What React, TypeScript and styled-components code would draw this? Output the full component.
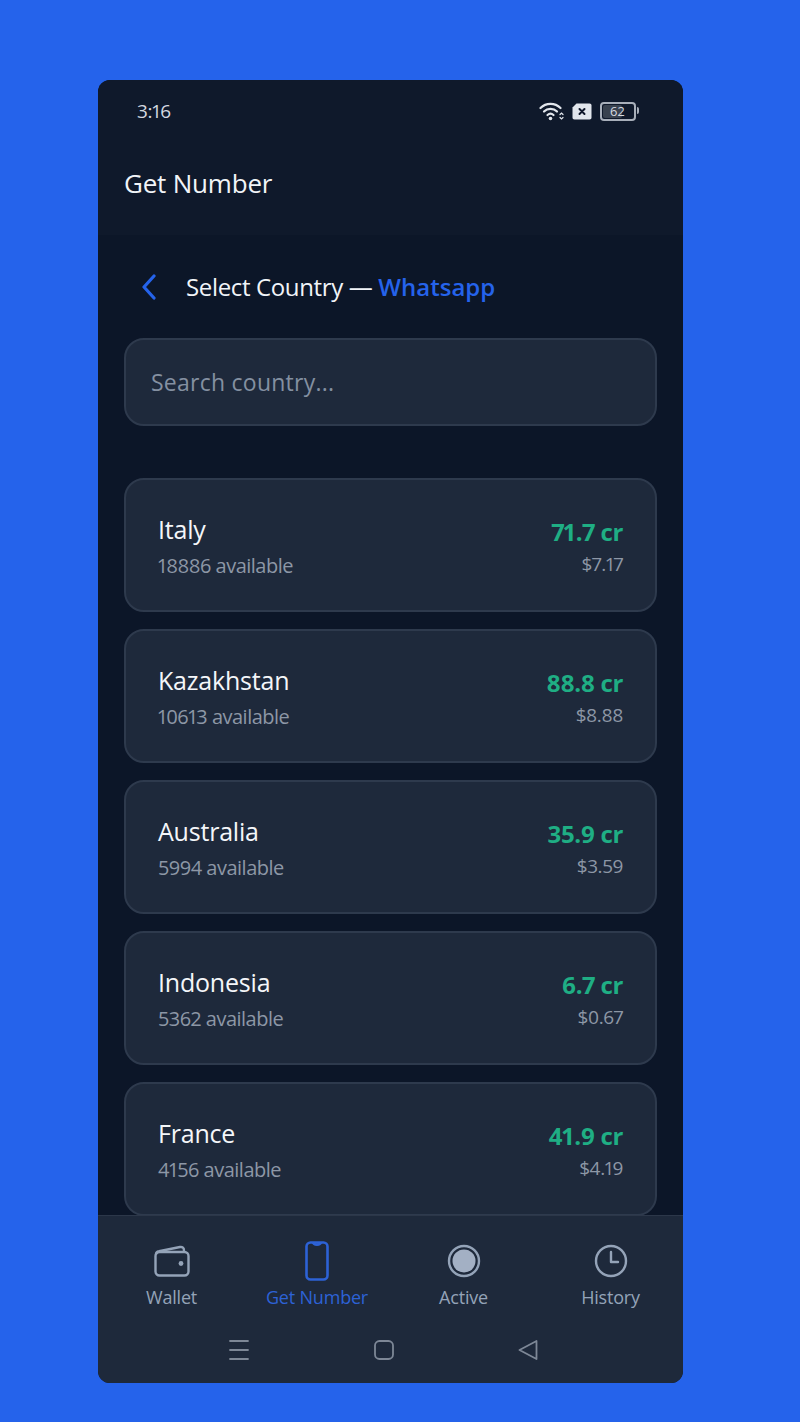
import React from "react";
import styled, { createGlobalStyle } from "styled-components";

const countries = [
  { name: "Italy", available: 18886, credits: "71.7 cr", price: "$7.17" },
  { name: "Kazakhstan", available: 10613, credits: "88.8 cr", price: "$8.88" },
  { name: "Australia", available: 5994, credits: "35.9 cr", price: "$3.59" },
  { name: "Indonesia", available: 5362, credits: "6.7 cr", price: "$0.67" },
  { name: "France", available: 4156, credits: "41.9 cr", price: "$4.19" },
];

const WalletIcon = () => (
  <svg width="36" height="34" viewBox="0 0 36 34" fill="none" stroke="currentColor" strokeWidth="2.4" strokeLinejoin="round">
    <path d="M2 10.5 C2 8.5 3 7.5 5 7.2 L26 3 C28.5 2.6 30 4 30 6.5 V8" />
    <rect x="1.5" y="8" width="33" height="23.5" rx="4" />
    <circle cx="27" cy="19.5" r="2.4" fill="currentColor" stroke="none" />
  </svg>
);

const PhoneIcon = () => (
  <svg width="24" height="40" viewBox="0 0 24 40" fill="none" stroke="currentColor" strokeWidth="2.6" strokeLinejoin="round">
    <rect x="1.5" y="1.5" width="21" height="37" rx="4" />
    <path d="M8 1.5 C8.5 3.4 9.5 3.6 12 3.6 C14.5 3.6 15.5 3.4 16 1.5" />
  </svg>
);

const ActiveIcon = () => (
  <svg width="34" height="34" viewBox="0 0 34 34" fill="none">
    <circle cx="17" cy="17" r="15" stroke="currentColor" strokeWidth="2.4" />
    <circle cx="17" cy="17" r="11.5" fill="#a3b0c4" />
  </svg>
);

const ClockIcon = () => (
  <svg width="34" height="34" viewBox="0 0 34 34" fill="none" stroke="currentColor" strokeWidth="2.4" strokeLinecap="round" strokeLinejoin="round">
    <circle cx="17" cy="17" r="15" />
    <path d="M17 8 V18 H24" />
  </svg>
);

const App = () => {
  return (
    <>
      <GlobalStyle />
      <Phone>
        <StatusBar>
          <Time>3:16</Time>
          <StatusIcons>
            <svg width="25" height="20" viewBox="0 0 25 20" fill="none" stroke="#e2e6ec" strokeWidth="2.2" strokeLinecap="round">
              <path d="M1.5 7 C7 1.5 16 1.5 21.5 7" />
              <path d="M5 10.5 C8.5 7 14.5 7 18 10.5" />
              <path d="M8.5 14 C10.5 12.3 12.5 12.3 14.5 14" />
              <circle cx="11.5" cy="17.5" r="1.8" fill="#e2e6ec" stroke="none" />
              <path d="M21 13.5 L22.5 12 L24 13.5 M21 16.5 L22.5 18 L24 16.5" strokeWidth="1.2" />
            </svg>
            <svg width="20" height="17" viewBox="0 0 20 17">
              <path d="M4.5 .5 H17.5 C18.8 .5 19.5 1.2 19.5 2.5 V14.5 C19.5 15.8 18.8 16.5 17.5 16.5 H2.5 C1.2 16.5 .5 15.8 .5 14.5 V4.5 Z" fill="#e2e6ec" />
              <path d="M7.5 6 L12.5 11 M12.5 6 L7.5 11" stroke="#0f172a" strokeWidth="2" strokeLinecap="round" />
            </svg>
            <Battery>
              <BatteryLevel>62</BatteryLevel>
            </Battery>
          </StatusIcons>
        </StatusBar>
        <AppHeader>Get Number</AppHeader>
        <Content>
          <PageHead>
            <svg width="16" height="26" viewBox="0 0 16 26" fill="none" stroke="#2563eb" strokeWidth="3.2" strokeLinecap="round" strokeLinejoin="round">
              <path d="M13 2 L3 13 L13 24" />
            </svg>
            <PageTitle>
              Select Country — <Service>Whatsapp</Service>
            </PageTitle>
          </PageHead>
          <SearchBox>Search country...</SearchBox>
          <List>
            {countries.map((c) => (
              <Card key={c.name}>
                <div>
                  <Name>{c.name}</Name>
                  <Available>{c.available} available</Available>
                </div>
                <Prices>
                  <Credits>{c.credits}</Credits>
                  <Price>{c.price}</Price>
                </Prices>
              </Card>
            ))}
          </List>
        </Content>
        <BottomNav>
          <Tabs>
            <Tab>
              <IconSlot><WalletIcon /></IconSlot>
              Wallet
            </Tab>
            <Tab $active>
              <IconSlot><PhoneIcon /></IconSlot>
              Get Number
            </Tab>
            <Tab>
              <IconSlot><ActiveIcon /></IconSlot>
              Active
            </Tab>
            <Tab>
              <IconSlot><ClockIcon /></IconSlot>
              History
            </Tab>
          </Tabs>
          <SystemBar>
            <svg width="22" height="22" viewBox="0 0 22 22" stroke="#7d8796" strokeWidth="1.8" strokeLinecap="round">
              <path d="M2 2 H20 M2 11 H20 M2 20 H20" />
            </svg>
            <svg width="20" height="20" viewBox="0 0 20 20" fill="none" stroke="#7d8796" strokeWidth="1.8">
              <rect x="1" y="1" width="18" height="18" rx="4.5" />
            </svg>
            <svg width="20" height="20" viewBox="0 0 20 20" fill="none" stroke="#7d8796" strokeWidth="1.8" strokeLinejoin="round">
              <path d="M1.5 10 L18.5 1 V19 Z" />
            </svg>
          </SystemBar>
        </BottomNav>
      </Phone>
    </>
  );
};

const GlobalStyle = createGlobalStyle`
  html, body {
    margin: 0;
    background: #2563eb;
  }
  body {
    font-family: "Open Sans", "Noto Sans", sans-serif;
    font-variant-numeric: proportional-nums;
  }
`;

const Phone = styled.div`
  display: flex;
  flex-direction: column;
  width: 585px;
  height: 1303px;
  margin: 80px 0 39px 98px;
  border-radius: 12px;
  overflow: hidden;
  background: #0c1628;
`;

const StatusBar = styled.div`
  display: flex;
  justify-content: space-between;
  align-items: center;
  height: 62px;
  padding: 0 47px 0 39px;
  background: #0f192b;
`;

const Time = styled.div`
  font-size: 19px;
  letter-spacing: -0.2px;
  color: #d5d9e0;
`;

const StatusIcons = styled.div`
  display: flex;
  align-items: center;
  gap: 8px;
`;

const Battery = styled.div`
  position: relative;
  width: 30px;
  height: 13px;
  padding: 1px;
  border: 2px solid #a8afba;
  border-radius: 4px;
  &::after {
    content: "";
    position: absolute;
    right: -5px;
    top: 3px;
    width: 2px;
    height: 7px;
    border-radius: 0 2px 2px 0;
    background: #a8afba;
  }
`;

const BatteryLevel = styled.div`
  width: 64%;
  height: 100%;
  font-size: 13px;
  line-height: 13px;
  text-indent: 7px;
  white-space: nowrap;
  color: #d5d9e0;
  background: #39424f;
  border-radius: 2px;
`;

const AppHeader = styled.div`
  height: 93px;
  padding: 0 26px 11px;
  box-sizing: border-box;
  display: flex;
  align-items: center;
  font-size: 26px;
  letter-spacing: -0.2px;
  color: #f1f4f8;
  background: #0f192b;
`;

const Content = styled.div`
  flex: 1;
  min-height: 0;
  padding: 0 26px;
  overflow: hidden;
`;

const PageHead = styled.div`
  display: flex;
  align-items: center;
  gap: 29px;
  height: 103px;
  padding-left: 17px;
`;

const PageTitle = styled.div`
  font-size: 24px;
  letter-spacing: -0.35px;
  color: #f1f4f8;
`;

const Service = styled.span`
  font-weight: 600;
  letter-spacing: 0;
  color: #2563eb;
`;

const SearchBox = styled.div`
  box-sizing: border-box;
  height: 88px;
  padding: 0 25px;
  display: flex;
  align-items: center;
  font-size: 23px;
  letter-spacing: 0.25px;
  color: #8490a1;
  background: #1e293b;
  border: 2px solid #2e3a4d;
  border-radius: 20px;
`;

const List = styled.div`
  display: flex;
  flex-direction: column;
  gap: 17px;
  margin-top: 52px;
`;

const Card = styled.div`
  box-sizing: border-box;
  flex: none;
  height: 134px;
  padding: 0 32px;
  display: flex;
  justify-content: space-between;
  align-items: center;
  background: #1e293b;
  border: 2px solid #2e3a4d;
  border-radius: 20px;
`;

const Name = styled.div`
  font-size: 25px;
  letter-spacing: -0.2px;
  line-height: 36px;
  margin-top: 1px;
  color: #f4f6f9;
`;

const Available = styled.div`
  font-size: 20px;
  letter-spacing: -0.5px;
  line-height: 30px;
  margin-top: 4px;
  color: #8d97a6;
`;

const Prices = styled.div`
  text-align: right;
`;

const Credits = styled.div`
  font-size: 24px;
  font-weight: 700;
  letter-spacing: -0.4px;
  line-height: 34px;
  margin-top: 3px;
  color: #1fae84;
`;

const Price = styled.div`
  font-size: 19px;
  letter-spacing: -0.4px;
  line-height: 28px;
  margin-top: 1px;
  color: #8d97a6;
`;

const BottomNav = styled.div`
  flex: none;
  height: 168px;
  background: #1e293b;
  border-top: 1px solid #2c3749;
  box-sizing: border-box;
`;

const Tabs = styled.div`
  display: grid;
  grid-template-columns: 147px 144px 149px 145px;
  height: 114px;
  padding-top: 24px;
  box-sizing: border-box;
`;

const Tab = styled.div<{ $active?: boolean }>`
  display: flex;
  flex-direction: column;
  align-items: center;
  font-size: 18px;
  letter-spacing: -0.2px;
  line-height: 28px;
  color: ${(p) => (p.$active ? "#2d62d6" : "#94a3b8")};
`;

const IconSlot = styled.div`
  display: flex;
  align-items: center;
  justify-content: center;
  height: 42px;
  margin-bottom: 1px;
`;

const SystemBar = styled.div`
  display: flex;
  justify-content: space-between;
  align-items: center;
  height: 40px;
  padding: 0 145px 0 130px;
`;

export default App;
